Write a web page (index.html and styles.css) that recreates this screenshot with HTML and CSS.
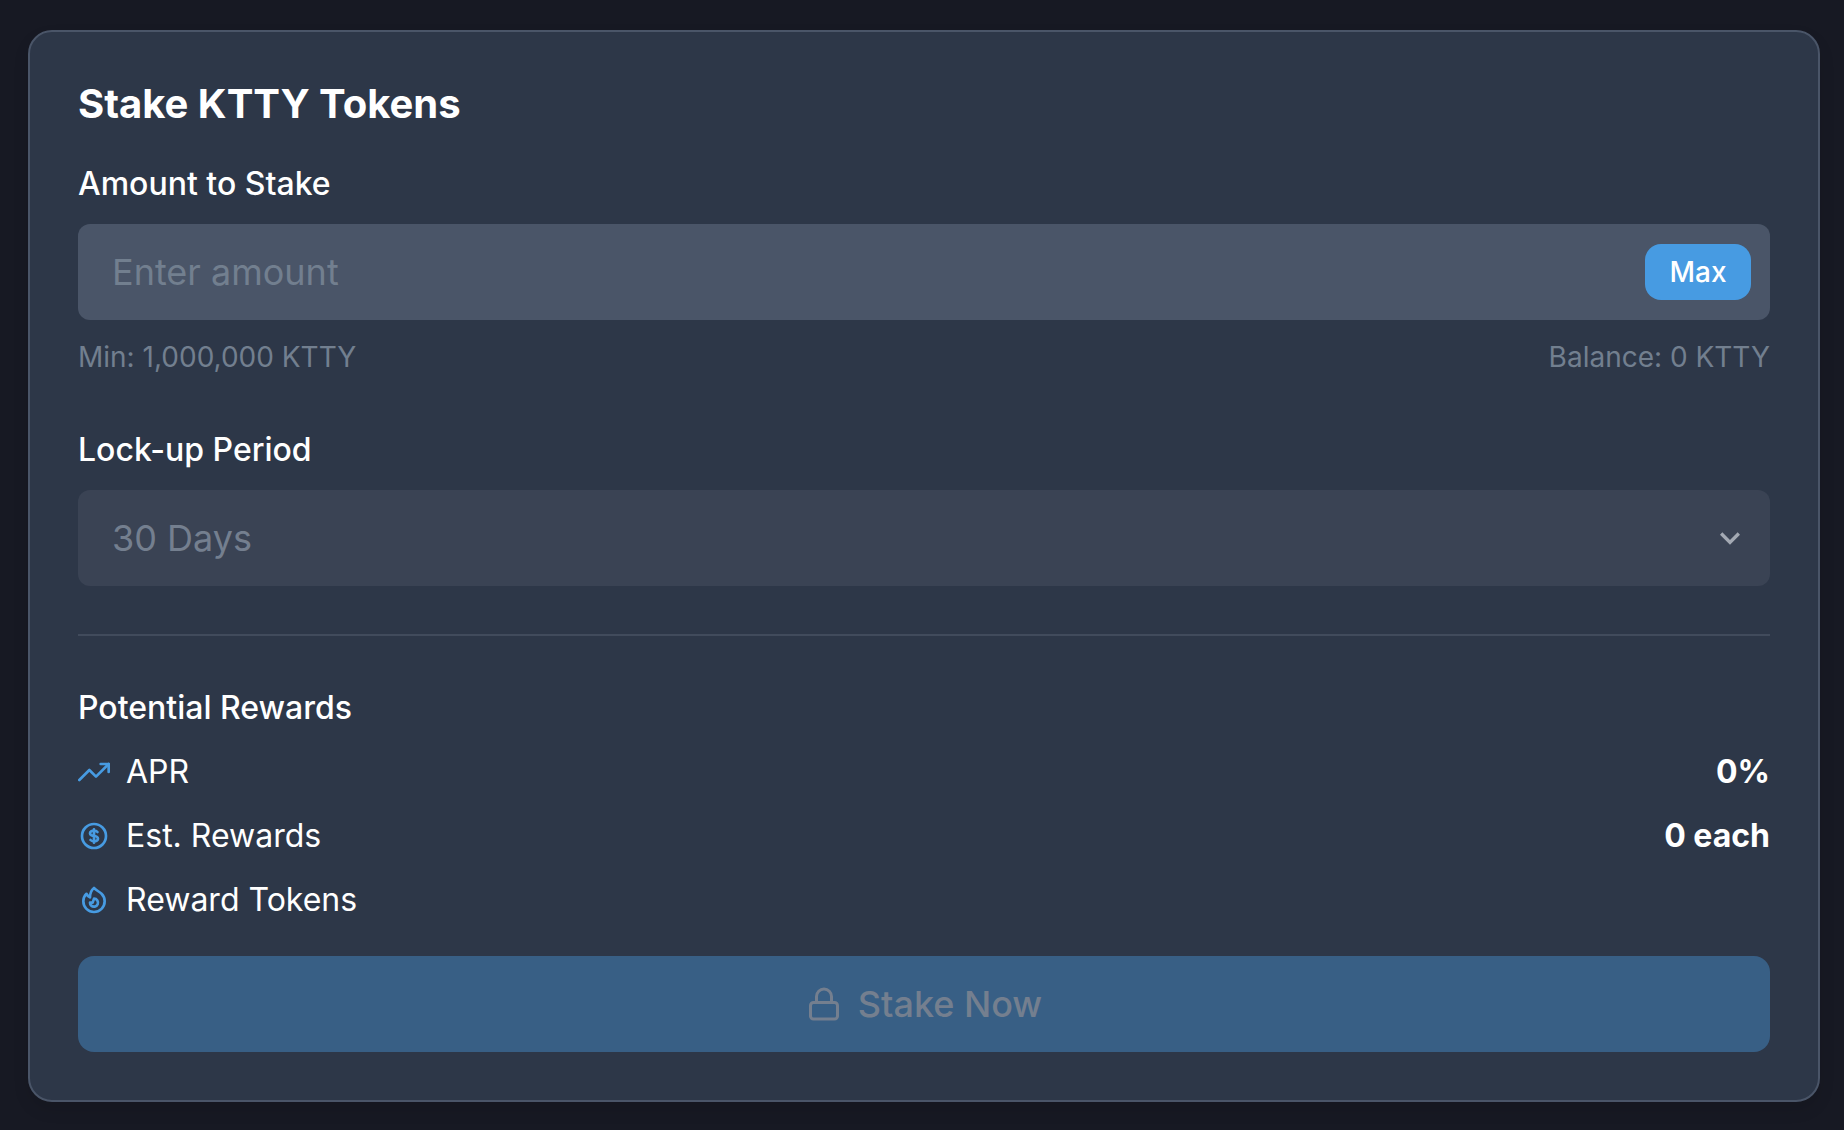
FILE: index.html
```html
<!DOCTYPE html>
<html lang="en">
<head>
    <meta charset="UTF-8">
    <meta name="viewport" content="width=device-width, initial-scale=1.0">
    <title>Stake KTTY Tokens</title>
    <link rel="stylesheet" href="styles.css">
</head>
<body>
    <form class="card">
        <h1>Stake KTTY Tokens</h1>

        <div class="form-group">
            <label for="amount">Amount to Stake</label>
            <div class="field">
                <input type="text" id="amount" class="control" placeholder="Enter amount">
                <button type="button" class="max-button">Max</button>
            </div>
            <div class="hint">
                <span>Min: 1,000,000 KTTY</span>
                <span>Balance: 0 KTTY</span>
            </div>
        </div>

        <div class="form-group">
            <label for="period">Lock-up Period</label>
            <div class="field">
                <select id="period" class="control" disabled>
                    <option>30 Days</option>
                </select>
                <svg class="chevron" viewBox="0 0 24 24" aria-hidden="true">
                    <path fill="currentColor" d="M16.59 8.59L12 13.17 7.41 8.59 6 10l6 6 6-6z"/>
                </svg>
            </div>
        </div>

        <hr>

        <section class="rewards">
            <h2>Potential Rewards</h2>
            <div class="row">
                <svg class="icon" viewBox="0 0 24 24" aria-hidden="true">
                    <path d="M23 6l-9.500 9.500-5-5L1 18"/>
                    <path d="M17 6h6v6"/>
                </svg>
                <span>APR</span>
                <strong>0%</strong>
            </div>
            <div class="row">
                <svg class="icon" viewBox="0 0 24 24" aria-hidden="true">
                    <path d="M12 8c-1.657 0-3 .895-3 2s1.343 2 3 2 3 .895 3 2-1.343 2-3 2m0-8c1.11 0 2.08.402 2.599 1M12 8V7m0 1v8m0 0v1m0-1c-1.11 0-2.08-.402-2.599-1M21 12a9 9 0 11-18 0 9 9 0 0118 0z"/>
                </svg>
                <span>Est. Rewards</span>
                <strong>0 each</strong>
            </div>
            <div class="row">
                <svg class="icon" viewBox="0 0 24 24" aria-hidden="true">
                    <path d="M17.657 18.657A8 8 0 016.343 7.343S7 9 9 10c0-2 .5-5 2.986-7C14 5 16.090 5.777 17.656 7.343A7.975 7.975 0 0120 13a7.975 7.975 0 01-2.343 5.657z"/>
                    <path d="M9.879 16.121A3 3 0 1012.015 11L11 14H9c0 .768.293 1.536.879 2.121z"/>
                </svg>
                <span>Reward Tokens</span>
            </div>
        </section>

        <button type="submit" class="stake-button" disabled>
            <svg class="lock" viewBox="0 0 24 24" aria-hidden="true">
                <rect x="3" y="11" width="18" height="11" rx="2"/>
                <path d="M7 11V7a5 5 0 0 1 10 0v4"/>
            </svg>
            Stake Now
        </button>
    </form>
</body>
</html>
```

FILE: styles.css
```css
* {
    box-sizing: border-box;
}
body {
    background-color: #171923;
    color: #fff;
    font-family: Inter, sans-serif;
    font-size: 32px;
    line-height: 48px;
    margin: 0;
    padding: 30px 24px 28px 28px;
}
.card {
    background-color: #2d3748;
    border: 2px solid #4a5568;
    border-radius: 24px;
    padding: 48px;
    box-shadow: 0 8px 16px rgba(0, 0, 0, 0.1);
}
h1 {
    font-size: 40px;
    font-weight: 700;
    margin: 0 0 32px;
}
h2, label {
    display: block;
    font-size: 32px;
    font-weight: 500;
    margin: 0 0 16px;
}
.form-group {
    margin-bottom: 48px;
}
.field {
    position: relative;
}
.control {
    display: block;
    width: 100%;
    height: 96px;
    padding: 0 34px;
    background-color: #4a5568;
    border: none;
    border-radius: 12px;
    color: #fff;
    font: inherit;
    font-size: 36px;
    appearance: none;
}
.control::placeholder {
    color: #727f8f;
}
.control:disabled {
    background-color: #3a4354;
    color: #747f8f;
    opacity: 1;
}
.max-button {
    position: absolute;
    top: 20px;
    right: 19px;
    min-width: 106px;
    height: 56px;
    padding: 0 24px;
    background-color: #479be2;
    border: none;
    border-radius: 16px;
    color: #fff;
    font: inherit;
    font-size: 28px;
    font-weight: 500;
    cursor: pointer;
}
.chevron {
    position: absolute;
    top: 28px;
    right: 20px;
    width: 40px;
    height: 40px;
    color: #a3a9b3;
    pointer-events: none;
}
.hint {
    display: flex;
    justify-content: space-between;
    margin-top: 16px;
    color: #727f8f;
    font-size: 28px;
    line-height: 42px;
}
hr {
    height: 2px;
    margin: 0 0 48px;
    background-color: #414b5c;
    border: none;
}
.rewards {
    display: flex;
    flex-direction: column;
    gap: 16px;
    margin-bottom: 32px;
}
h2 {
    margin: 0;
}
.row {
    display: flex;
    align-items: center;
    gap: 16px;
}
.row strong {
    margin-left: auto;
    font-weight: 700;
}
.icon, .lock {
    fill: none;
    stroke: currentColor;
    stroke-width: 2;
    stroke-linecap: round;
    stroke-linejoin: round;
}
.icon {
    width: 32px;
    height: 32px;
    color: #479be2;
}
.stake-button {
    display: flex;
    align-items: center;
    justify-content: center;
    gap: 16px;
    width: 100%;
    height: 96px;
    background-color: #385f85;
    border: none;
    border-radius: 16px;
    color: #747f8f;
    font: inherit;
    font-size: 36px;
    font-weight: 500;
}
.lock {
    width: 36px;
    height: 36px;
}
```
